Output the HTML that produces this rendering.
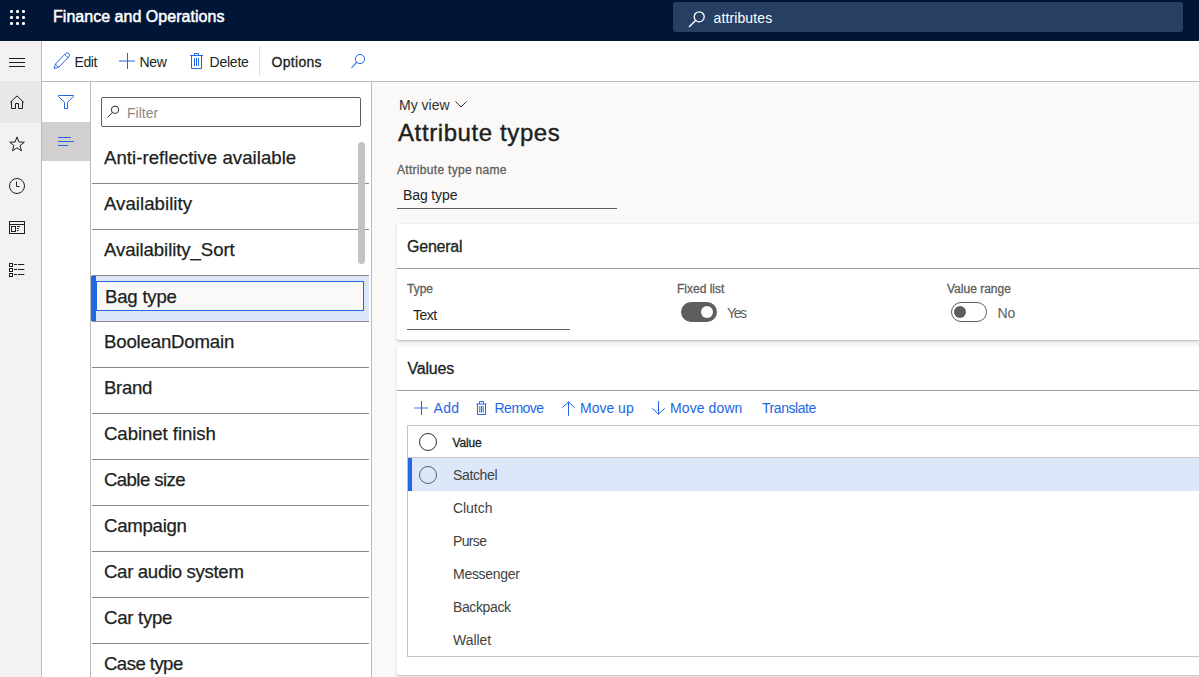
<!DOCTYPE html>
<html><head><meta charset="utf-8">
<style>
*{box-sizing:border-box;margin:0;padding:0}
html,body{width:1199px;height:677px;overflow:hidden;background:#faf9f8;font-family:"Liberation Sans",sans-serif;color:#323130}
.a{position:absolute}
.t{position:absolute;white-space:nowrap;line-height:1}
.sb{-webkit-text-stroke:0.3px currentColor}
.sl{-webkit-text-stroke:0.3px currentColor}
svg{position:absolute;overflow:visible}
.dv{position:absolute;left:92px;width:277px;height:1px;background:#8a8886}
.lt{position:absolute;left:104px;font-size:18.6px;line-height:1;white-space:nowrap;color:#201f1e;-webkit-text-stroke:0.25px #201f1e}
.card{position:absolute;left:397px;width:830px;background:#fff;border-radius:2px;box-shadow:0 1.6px 3.6px rgba(0,0,0,.13),0 0.3px 0.9px rgba(0,0,0,.11)}
.lbl{position:absolute;font-size:12px;line-height:1;white-space:nowrap;color:#605e5c;-webkit-text-stroke:0.3px #605e5c}
.bt{position:absolute;font-size:14px;line-height:1;white-space:nowrap;color:#2266e3}
.gr{position:absolute;left:453px;font-size:14px;line-height:1;white-space:nowrap;color:#403f3e}
</style></head><body>
<div class="a" style="left:0;top:0;width:1199px;height:41px;background:#011536"></div>
<svg style="left:0;top:0" width="41" height="41"><g fill="#fff"><rect x="10" y="10" width="3" height="3" rx="1.2"/><rect x="16" y="10" width="3" height="3" rx="1.2"/><rect x="22" y="10" width="3" height="3" rx="1.2"/><rect x="10" y="16" width="3" height="3" rx="1.2"/><rect x="16" y="16" width="3" height="3" rx="1.2"/><rect x="22" y="16" width="3" height="3" rx="1.2"/><rect x="10" y="22" width="3" height="3" rx="1.2"/><rect x="16" y="22" width="3" height="3" rx="1.2"/><rect x="22" y="22" width="3" height="3" rx="1.2"/></g></svg>
<div class="t sb" style="left:53px;top:9px;font-size:16px;color:#fff;-webkit-text-stroke:0.5px #fff;letter-spacing:0.03px">Finance and Operations</div>
<div class="a" style="left:673px;top:2px;width:510px;height:30px;background:#283f64;border-radius:3px"></div>
<svg style="left:688px;top:11px" width="17" height="16"><circle cx="11.2" cy="5.8" r="5" fill="none" stroke="#fff" stroke-width="1.3"/><line x1="7.6" y1="9.4" x2="1" y2="16" stroke="#fff" stroke-width="1.4"/></svg>
<div class="t" style="left:713.5px;top:11px;font-size:14px;color:#fff;letter-spacing:0.12px">attributes</div>
<div class="a" style="left:0;top:41px;width:41px;height:636px;background:#f3f2f1"></div>
<div class="a" style="left:41px;top:41px;width:1px;height:636px;background:#bdbab7"></div>
<div class="a" style="left:9px;top:58px;width:16px;height:1px;background:#201f1e"></div>
<div class="a" style="left:9px;top:62px;width:16px;height:1px;background:#201f1e"></div>
<div class="a" style="left:9px;top:66px;width:16px;height:1px;background:#201f1e"></div>
<div class="a" style="left:0;top:81px;width:41px;height:42px;background:#eae8e6"></div>
<svg style="left:9px;top:95px" width="16" height="15"><path d="M1.2 7.4 L8 0.9 L14.8 7.4 M2.5 6.2 V13.5 H6.5 V8.5 H9.5 V13.5 H13.5 V6.2" fill="none" stroke="#201f1e" stroke-width="1"/></svg>
<svg style="left:9px;top:136px" width="16" height="16"><path d="M8.00 0.90 L9.88 6.01 L15.32 6.22 L11.04 9.59 L12.53 14.83 L8.00 11.80 L3.47 14.83 L4.96 9.59 L0.68 6.22 L6.12 6.01 Z" fill="none" stroke="#201f1e" stroke-width="1" stroke-width="1.1" stroke-linejoin="miter"/></svg>
<svg style="left:9px;top:178px" width="16" height="16"><circle cx="8" cy="8" r="7.5" fill="none" stroke="#201f1e" stroke-width="1"/><path d="M7.5 3.5 V8.5 H10.5" fill="none" stroke="#201f1e" stroke-width="1" stroke-width="1.2"/></svg>
<svg style="left:9px;top:221px" width="16" height="13"><rect x="0.5" y="0.5" width="15" height="12" fill="none" stroke="#201f1e" stroke-width="1"/><line x1="0.5" y1="3.5" x2="15.5" y2="3.5" stroke="#201f1e"/><rect x="2.5" y="5.5" width="4" height="5" fill="none" stroke="#201f1e" stroke-width="1"/><path d="M8 5.5 H11 M8 7.5 H10 M8 9.5 H9.5" stroke="#201f1e" stroke-width="1"/></svg>
<svg style="left:9px;top:263px" width="16" height="12"><rect x="0.5" y="0.5" width="3" height="3" fill="none" stroke="#201f1e" stroke-width="1"/><rect x="0.5" y="5.5" width="3" height="3" fill="none" stroke="#201f1e" stroke-width="1"/><rect x="0.5" y="10.5" width="3" height="3" fill="none" stroke="#201f1e" stroke-width="1"/><path d="M5 1.5 H8 M9 1.5 H15.3 M5 6.5 H8 M9 6.5 H15.3 M5 11.5 H8 M9 11.5 H15.3" stroke="#201f1e" stroke-width="1"/></svg>
<div class="a" style="left:42px;top:41px;width:1157px;height:40px;background:#fff"></div>
<div class="a" style="left:42px;top:81px;width:1157px;height:1px;background:#bdbab7"></div>
<svg style="left:53px;top:53px" width="17" height="16"><path d="M1.2 15.5 L2.4 11.04 L12.57 0.57 A2.3 2.3 0 0 1 15.83 3.83 L5.66 14.3 Z M2.4 11.04 L5.66 14.3 M11.7 1.4 L15 4.7" fill="none" stroke="#2266e3" stroke-width="1" stroke-width="1.05"/></svg>
<div class="t" style="left:74.5px;top:55px;font-size:14px;color:#201f1e;letter-spacing:-0.45px">Edit</div>
<div class="a" style="left:127px;top:53px;width:1px;height:16px;background:#2266e3"></div>
<div class="a" style="left:119px;top:60px;width:16px;height:2px;background:#2266e3;opacity:.5"></div>
<div class="t" style="left:139.5px;top:55px;font-size:14px;color:#201f1e;letter-spacing:-0.35px">New</div>
<svg style="left:190px;top:53px" width="13" height="16"><path d="M0 2.5 H13 M4.5 2.5 V0.5 H8.5 V2.5 M1.5 2.5 V15.5 H11.5 V2.5 M4.5 5 V13 M6.5 5 V13 M8.5 5 V13" fill="none" stroke="#2266e3" stroke-width="1"/></svg>
<div class="t" style="left:209.5px;top:55px;font-size:14px;color:#201f1e;letter-spacing:-0.22px">Delete</div>
<div class="a" style="left:259px;top:46px;width:1px;height:30px;background:#e1dfdd"></div>
<div class="t sb" style="left:271.5px;top:55px;font-size:14px;letter-spacing:0.3px;color:#201f1e">Options</div>
<svg style="left:351px;top:54px" width="15" height="15"><circle cx="9" cy="5" r="4.6" fill="none" stroke="#2266e3" stroke-width="1" stroke-width="1.1"/><line x1="5.7" y1="8.3" x2="0.5" y2="14" stroke="#2266e3" stroke-width="1.1"/></svg>
<div class="a" style="left:42px;top:82px;width:48px;height:595px;background:#fff"></div>
<div class="a" style="left:90px;top:82px;width:1px;height:595px;background:#bdbab7"></div>
<svg style="left:58px;top:95px" width="17" height="14"><path d="M0.5 0.5 H15.5 V1.5 L9.5 7.3 V13.5 H6.5 V7.3 L0.5 1.5 Z" fill="none" stroke="#2266e3" stroke-width="1" stroke-width="1.1" stroke-linejoin="miter"/></svg>
<div class="a" style="left:42px;top:122px;width:48px;height:39px;background:#d2d0ce"></div>
<div class="a" style="left:58px;top:137px;width:13px;height:1px;background:#2266e3"></div>
<div class="a" style="left:58px;top:141px;width:16px;height:1px;background:#2266e3"></div>
<div class="a" style="left:58px;top:145px;width:10px;height:1px;background:#2266e3"></div>
<div class="a" style="left:91px;top:82px;width:280px;height:595px;background:#fff"></div>
<div class="a" style="left:371px;top:82px;width:1px;height:595px;background:#bdbab7"></div>
<div class="a" style="left:101px;top:97px;width:260px;height:30px;border:1px solid #605e5c;border-radius:2px;background:#fff"></div>
<svg style="left:107px;top:106px" width="12" height="12"><circle cx="8" cy="3.8" r="3.7" fill="none" stroke="#323130" stroke-width="1"/><line x1="5.4" y1="6.4" x2="0.6" y2="11.4" stroke="#323130" stroke-width="1"/></svg>
<div class="t" style="left:127px;top:106px;font-size:14px;color:#8a8886">Filter</div>
<div class="dv" style="top:183px"></div>
<div class="dv" style="top:229px"></div>
<div class="dv" style="top:275px"></div>
<div class="dv" style="top:321px"></div>
<div class="dv" style="top:367px"></div>
<div class="dv" style="top:413px"></div>
<div class="dv" style="top:459px"></div>
<div class="dv" style="top:505px"></div>
<div class="dv" style="top:551px"></div>
<div class="dv" style="top:597px"></div>
<div class="dv" style="top:643px"></div>
<div class="a" style="left:91px;top:276px;width:278px;height:45px;background:#dce7fa"></div>
<div class="a" style="left:91px;top:276px;width:5px;height:45px;background:#2266e3"></div>
<div class="a" style="left:96px;top:281px;width:268px;height:30px;border:1px solid #2266e3;background:#faf9f8"></div>
<div class="a" style="left:358px;top:142px;width:7px;height:122px;background:#c2c2c2;border-radius:4px"></div>
<div class="lt" style="top:149px;letter-spacing:0.04px;">Anti-reflective available</div>
<div class="lt" style="top:195px;letter-spacing:0.05px;">Availability</div>
<div class="lt" style="top:241px;letter-spacing:-0.08px;">Availability_Sort</div>
<div class="lt" style="top:287px;left:105px;letter-spacing:-0.21px;margin-top:0.5px;">Bag type</div>
<div class="lt" style="top:333px;letter-spacing:-0.17px;">BooleanDomain</div>
<div class="lt" style="top:379px;letter-spacing:-0.33px;">Brand</div>
<div class="lt" style="top:425px;letter-spacing:-0.06px;">Cabinet finish</div>
<div class="lt" style="top:471px;letter-spacing:-0.58px;">Cable size</div>
<div class="lt" style="top:517px;letter-spacing:-0.26px;">Campaign</div>
<div class="lt" style="top:563px;letter-spacing:-0.32px;">Car audio system</div>
<div class="lt" style="top:609px;letter-spacing:-0.27px;">Car type</div>
<div class="lt" style="top:655px;letter-spacing:-0.56px;">Case type</div>
<div class="t" style="left:399px;top:98px;font-size:14px;color:#323130">My view</div>
<svg style="left:455px;top:101px" width="12" height="7"><path d="M0.5 0.5 L6 6 L11.5 0.5" fill="none" stroke="#323130" stroke-width="1"/></svg>
<div class="t sb" style="left:398px;top:121px;font-size:24px;letter-spacing:0.6px;color:#201f1e;-webkit-text-stroke:0.4px #201f1e">Attribute types</div>
<div class="lbl" style="left:397px;top:164px;letter-spacing:0.3px">Attribute type name</div>
<div class="t" style="left:403px;top:188px;font-size:14px;color:#201f1e;letter-spacing:-0.12px">Bag type</div>
<div class="a" style="left:397px;top:208px;width:220px;height:1px;background:#605e5c"></div>
<div class="card" style="top:224px;height:116px"></div>
<div class="t sb" style="left:407px;top:239px;font-size:16px;letter-spacing:-0.22px;color:#201f1e">General</div>
<div class="a" style="left:397px;top:268px;width:802px;height:1px;background:#a19f9d"></div>
<div class="lbl" style="left:407px;top:283px">Type</div>
<div class="t" style="left:413px;top:308px;font-size:14px;color:#201f1e;letter-spacing:-0.5px">Text</div>
<div class="a" style="left:407px;top:329px;width:163px;height:1px;background:#605e5c"></div>
<div class="lbl" style="left:677px;top:283px">Fixed list</div>
<div class="a" style="left:681px;top:302px;width:36px;height:20px;border-radius:10px;background:#5f5e5c"></div>
<div class="a" style="left:701px;top:306px;width:12px;height:12px;border-radius:6px;background:#fff"></div>
<div class="t" style="left:727px;top:306px;font-size:14px;color:#605e5c;letter-spacing:-1.4px">Yes</div>
<div class="lbl" style="left:947px;top:283px">Value range</div>
<div class="a" style="left:951px;top:302px;width:36px;height:20px;border-radius:10px;border:1px solid #605e5c;background:#fff"></div>
<div class="a" style="left:954px;top:306px;width:12px;height:12px;border-radius:6px;background:#5f5e5c"></div>
<div class="t" style="left:997.5px;top:306px;font-size:14px;color:#605e5c">No</div>
<div class="card" style="top:346px;height:329px"></div>
<div class="t sb" style="left:407.5px;top:361px;font-size:16px;letter-spacing:-0.2px;color:#201f1e">Values</div>
<div class="a" style="left:397px;top:390px;width:802px;height:1px;background:#a19f9d"></div>
<div class="a" style="left:421px;top:401px;width:1px;height:14px;background:#2266e3"></div>
<div class="a" style="left:414px;top:407px;width:14px;height:2px;background:#2266e3;opacity:.45"></div>
<div class="bt" style="left:433.5px;top:401px;letter-spacing:0.3px">Add</div>
<svg style="left:476px;top:401px" width="11" height="14"><path d="M0.5 3 H10.5 M3.5 3 V0.5 H7.5 V3 M1.5 3 V13.5 H9.5 V3 M3.8 5 V11.5 M5.5 5 V11.5 M7.2 5 V11.5" fill="none" stroke="#2266e3" stroke-width="1"/></svg>
<div class="bt" style="left:494.5px;top:401px;letter-spacing:-0.5px">Remove</div>
<svg style="left:561px;top:401px" width="14" height="14"><path d="M7.5 1 V14.8 M1.3 6.7 L7.5 0.9 L13.7 6.7" fill="none" stroke="#2266e3" stroke-width="1"/></svg>
<div class="bt" style="left:580px;top:401px">Move up</div>
<svg style="left:651px;top:401px" width="14" height="14"><path d="M7.5 0 V13 M1.3 7.3 L7.5 13.2 L13.7 7.3" fill="none" stroke="#2266e3" stroke-width="1"/></svg>
<div class="bt" style="left:670px;top:401px;letter-spacing:0.1px">Move down</div>
<div class="bt" style="left:762px;top:401px;letter-spacing:-0.45px">Translate</div>
<div class="a" style="left:407px;top:425px;width:800px;height:232px;border:1px solid #c8c6c4;background:#fff"></div>
<div class="a" style="left:408px;top:457px;width:791px;height:1px;background:#c8c6c4"></div>
<div class="a" style="left:419px;top:433px;width:18px;height:18px;border-radius:9px;border:1px solid #323130"></div>
<div class="t" style="left:452.5px;top:437px;font-size:12px;color:#201f1e;-webkit-text-stroke:0.3px #201f1e;letter-spacing:-0.15px">Value</div>
<div class="a" style="left:408px;top:458px;width:791px;height:33px;background:#dce7fa"></div>
<div class="a" style="left:408px;top:458px;width:4px;height:33px;background:#2266e3"></div>
<div class="a" style="left:419px;top:466px;width:18px;height:18px;border-radius:9px;border:1px solid #605e5c"></div>
<div class="gr" style="top:468px;letter-spacing:-0.35px">Satchel</div>
<div class="gr" style="top:501px;letter-spacing:-0.05px">Clutch</div>
<div class="gr" style="top:534px;letter-spacing:-0.65px">Purse</div>
<div class="gr" style="top:567px;letter-spacing:-0.28px">Messenger</div>
<div class="gr" style="top:600px;letter-spacing:-0.38px">Backpack</div>
<div class="gr" style="top:633px;letter-spacing:-0.05px">Wallet</div>
</body></html>
